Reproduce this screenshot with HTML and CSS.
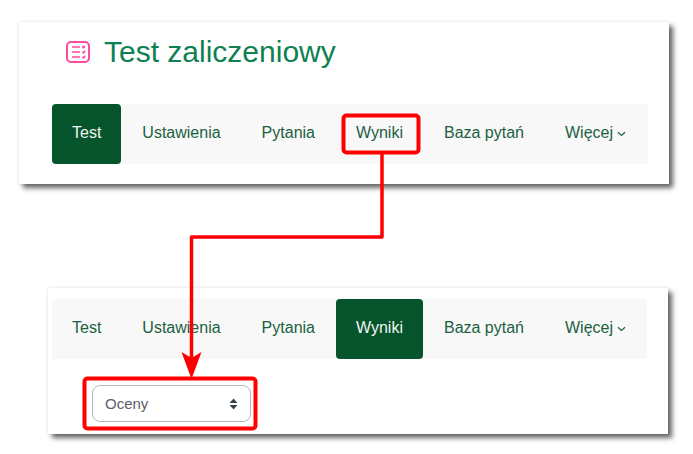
FILE: index.html
```html
<!DOCTYPE html>
<html lang="pl">
<head>
    <meta charset="UTF-8">
    <meta name="viewport" content="width=device-width, initial-scale=1.0">
    <title>Test zaliczeniowy</title>
    <link rel="stylesheet" href="styles.css">
</head>
<body>
    <div class="page">
        <section class="card card-top">
            <div class="heading">
                <svg class="quiz-icon" width="24" height="22" viewBox="0 0 24 22" fill="none" stroke="#fb4a9f" stroke-width="2">
                    <rect x="1" y="1" width="22" height="20" rx="4"/>
                    <path d="M6 6h8M6 11h8M6 16h8" stroke-width="1.7"/>
                    <path d="M16.3 6h2.6" stroke-width="2.6"/>
                    <path d="M16.3 10.8l1.2 1 1.7-2M16.3 15.8l1.2 1 1.7-2" stroke-width="1.6"/>
                </svg>
                <h1>Test zaliczeniowy</h1>
            </div>
            <nav class="tabs">
                <a class="tab active">Test</a>
                <a class="tab">Ustawienia</a>
                <a class="tab">Pytania</a>
                <a class="tab">Wyniki</a>
                <a class="tab">Baza pytań</a>
                <a class="tab">Więcej
                    <svg class="chevron" width="9" height="6" viewBox="0 0 9 6" fill="none" stroke="#1b6141" stroke-width="1.2"><path d="M1 1.2l3.5 3.3L8 1.2"/></svg>
                </a>
            </nav>
        </section>

        <section class="card card-bottom">
            <nav class="tabs">
                <a class="tab">Test</a>
                <a class="tab">Ustawienia</a>
                <a class="tab">Pytania</a>
                <a class="tab active">Wyniki</a>
                <a class="tab">Baza pytań</a>
                <a class="tab">Więcej
                    <svg class="chevron" width="9" height="6" viewBox="0 0 9 6" fill="none" stroke="#1b6141" stroke-width="1.2"><path d="M1 1.2l3.5 3.3L8 1.2"/></svg>
                </a>
            </nav>
            <div class="select-row">
                <div class="select">
                    <span>Oceny</span>
                    <svg width="9" height="12" viewBox="0 0 9 12" fill="#3a4149"><path d="M4.5 0.5L8.5 5H0.5zM4.5 11.5L0.5 7H8.5z"/></svg>
                </div>
            </div>
        </section>

        <!-- czerwone oznaczenia na wierzchu -->
        <svg class="marks" width="693" height="454" viewBox="0 0 693 454" fill="none" stroke="#ff0000" stroke-width="4">
            <rect x="343.5" y="115.5" width="75" height="37" rx="3"/>
            <path d="M382 153V237H191.5V362" stroke-width="3.5" stroke-linejoin="round"/>
            <path d="M181.5 352L191.5 358L201.5 352L191.5 379Z" fill="#ff0000" stroke="none"/>
            <rect x="84.5" y="378.5" width="171" height="50" rx="3"/>
        </svg>
    </div>
</body>
</html>
```

FILE: styles.css
```css
body {
    margin: 0;
    background: #fff;
    font-family: "Liberation Sans", Arial, sans-serif;
    font-size: 16px;
    color: #1b6141;
}
.page {
    position: relative;
    width: 693px;
    height: 454px;
    overflow: hidden;
    padding-top: 22px;
    box-sizing: border-box;
}
.card {
    background: #fff;
    box-shadow: 4px 4px 5px rgba(0, 0, 0, 0.6), 0 0 3px rgba(0, 0, 0, 0.1);
    box-sizing: border-box;
}
.card-top {
    width: 650px;
    height: 162px;
    margin-left: 19px;
    padding: 0 21px 0 33px;
}
.card-bottom {
    width: 620px;
    height: 146px;
    margin: 104px 0 0 48px;
    padding: 11px 21px 0 4px;
}
.heading {
    display: flex;
    align-items: center;
    gap: 14px;
    height: 60px;
    margin-bottom: 22px;
    padding-left: 14px;
    box-sizing: border-box;
}
h1 {
    margin: 0;
    font-size: 30px;
    font-weight: 400;
    color: #0f8050;
}
.tabs {
    display: flex;
    gap: 1px;
    height: 60px;
    background: #f8f8f8;
}
.tab {
    display: flex;
    align-items: center;
    gap: 4px;
    padding: 0 20px 3px;
    border-radius: 4px;
}
.tab.active {
    background: #05542c;
    color: #f0f5f2;
}
.chevron {
    margin-top: 3px;
}
.select-row {
    padding: 26px 0 0 40px;
}
.select {
    display: flex;
    align-items: center;
    justify-content: space-between;
    width: 159px;
    height: 37px;
    padding: 0 12px;
    box-sizing: border-box;
    border: 1px solid #b5b8bf;
    border-radius: 8px;
    font-size: 15px;
    color: #5a6068;
}
.marks {
    position: absolute;
    top: 0;
    left: 0;
}
```
